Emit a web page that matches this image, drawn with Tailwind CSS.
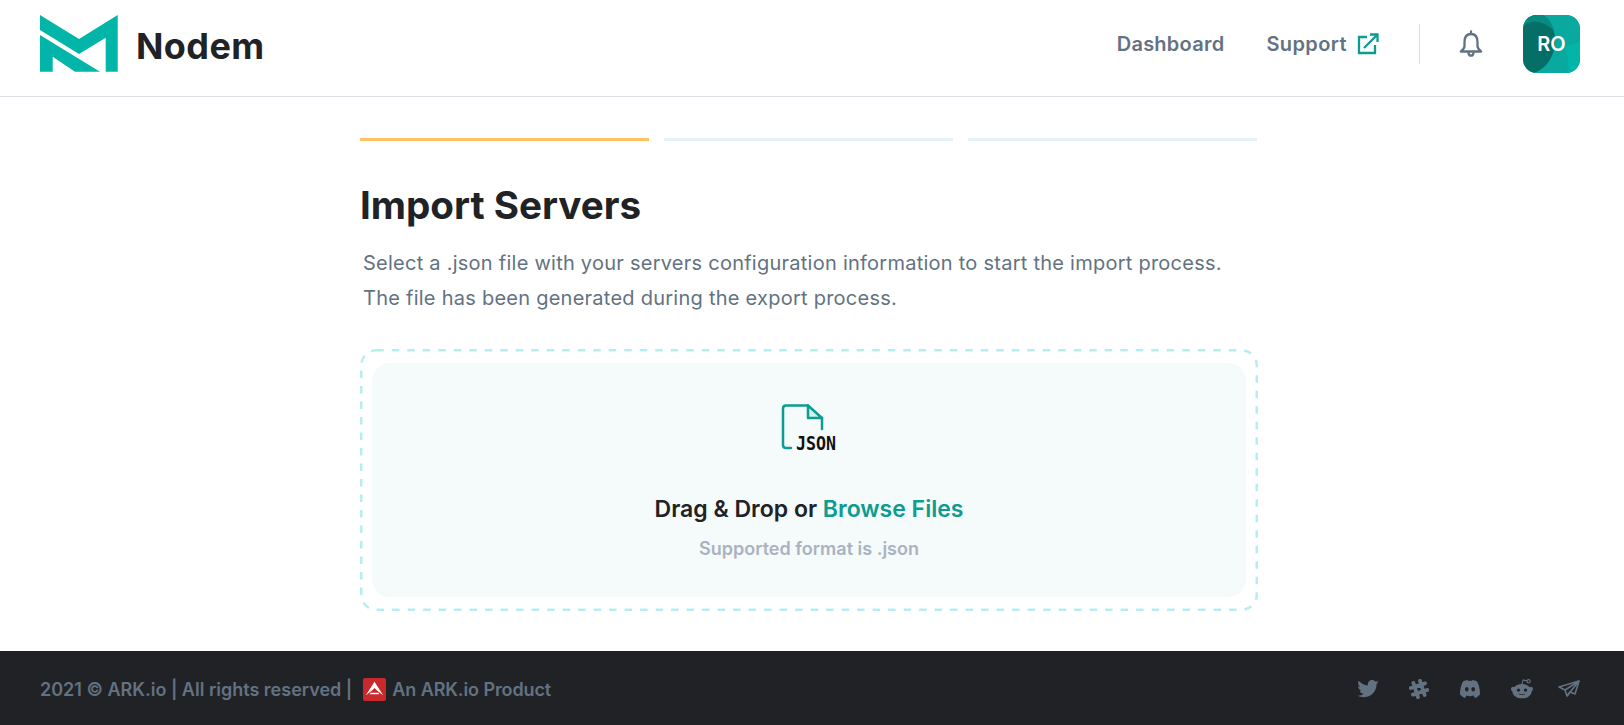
<!DOCTYPE html>
<html>

<head>
  <script src="https://cdn.jsdelivr.net/npm/@tailwindcss/browser@4"></script>
</head>

<body class="bg-white font-['Inter',sans-serif]">
  <div class="flex flex-col h-[725px] overflow-hidden">
    <!-- Header -->
    <header class="flex items-center justify-between h-[97px] pl-10 pr-11 pb-2 border-b border-[#dbdee5] shrink-0">
      <div class="flex items-center gap-[18px]">
        <svg class="-mt-[2px] w-[78px] h-[57px]" viewBox="40 15 78 57" fill="#02b5a9">
          <path d="M40 15L79 39L117.7 15V71.7H105.7V37.7L79 54L40 30Z" />
          <path d="M40 35L100 71.7H75L52.7 56.7V71.7H40Z" />
        </svg>
        <span class="mt-[3px] text-[36px] leading-none font-bold tracking-[0.4px] text-[#212225]">Nodem</span>
      </div>
      <div class="flex items-center">
        <a class="text-[20px] font-semibold tracking-[0.25px] text-[#637282]">Dashboard</a>
        <a class="ml-[42px] text-[20px] font-semibold tracking-[0.4px] text-[#637282]">Support</a>
        <svg class="ml-[10px] w-[22px] h-[22px]" viewBox="0 0 22 22" fill="none" stroke="#0c9c92" stroke-width="2.300">
          <path d="M10 4H2V20H18V12" />
          <path d="M7 15L20 2M13 1.500H20.500V9" />
        </svg>
        <div class="ml-10 w-px h-10 bg-[#dbdee5]"></div>
        <svg class="ml-[39px] w-[24px] h-[28px]" viewBox="0 0 24 28" fill="none" stroke="#637282" stroke-width="2.300" stroke-linejoin="round" stroke-linecap="round">
          <path d="M12 4C7 4 5.500 8 5.500 12V16C5.500 18.500 3.500 20 1.800 21.500H22.200C20.500 20 18.500 18.500 18.500 16V12C18.500 8 17 4 12 4Z" />
          <path d="M12 1.500V4M9.500 23C10 26.500 14 26.500 14.500 23" />
        </svg>
        <div class="relative ml-10 w-[57px] h-[58px] rounded-[14px] overflow-hidden bg-[#0aa99f] flex items-center justify-center">
          <svg class="absolute inset-0 w-full h-full" viewBox="0 0 57 58">
            <path d="M0 0H57V58H0Z" fill="#0aa99f" />
            <path d="M44 58C46 50 45 40 42 32L57 27V58Z" fill="#02b5a9" />
            <path d="M0 0H20C26 4 32 12 32 26C32 42 22 55 10 58H0Z" fill="#056e66" />
            <path d="M0 0H20C26 4 29 8 31 16C24 8 12 5 4 8L0 12Z" fill="#078a80" />
          </svg>
          <span class="relative text-[20px] font-semibold text-white">RO</span>
        </div>
      </div>
    </header>

    <!-- Import step -->
    <main class="flex-1 pl-[360px]">
      <div class="w-[898px]">
        <div class="flex gap-[15.500px] w-[897px] pt-[41px]">
          <div class="flex-1 h-[3px] bg-[#ffc163]"></div>
          <div class="flex-1 h-[3px] bg-[#e5f0f8]"></div>
          <div class="flex-1 h-[3px] bg-[#e5f0f8]"></div>
        </div>
        <h1 class="mt-10 text-[38.6px] leading-[48px] font-bold text-[#212225]">Import Servers</h1>
        <p class="mt-[17px] ml-[3px] text-[20px] leading-[35px] tracking-[0.25px] text-[#637282]">Select a .json file with your servers configuration information to start the import process.<br>The file has been generated during the export process.</p>
        <div class="relative mt-[33px] w-[898px] h-[262px] px-3 pt-[14px] pb-[14px]">
          <svg class="absolute inset-0" width="898" height="262" fill="none">
            <rect x="1.250" y="1.250" width="895.500" height="259.500" rx="15" stroke="#b5eeee" stroke-width="2.500" stroke-dasharray="7.500 8" />
          </svg>
          <div class="flex flex-col items-center h-full rounded-[18px] bg-[#f5fafa]">
            <svg class="mt-[41px] ml-3 w-[68px] h-[52px]" viewBox="0 0 68 52" fill="none">
              <path d="M27 1.500H5C3 1.500 2 2.500 2 4.500V41C2 43 3 44 5 44H10" stroke="#0c9c92" stroke-width="2.500" stroke-linecap="round" />
              <path d="M27 1.500L41 14H27Z" fill="#d4efed" stroke="#0c9c92" stroke-width="2.500" stroke-linejoin="round" />
              <path d="M41 14V25" stroke="#0c9c92" stroke-width="2.500" stroke-linecap="round" />
              <text x="15" y="46" textLength="40" lengthAdjust="spacingAndGlyphs" fill="#111" font-size="19" font-weight="700" font-family="DejaVu Sans Mono">JSON</text>
            </svg>
            <p class="mt-[38px] text-[23px] leading-[30px] font-semibold text-[#212225]">Drag &amp; Drop or <span class="text-[#0c9c92]">Browse Files</span></p>
            <p class="mt-[11px] text-[18px] leading-[28px] font-semibold text-[#a9b3c1]">Supported format is .json</p>
          </div>
        </div>
      </div>
    </main>

    <!-- Footer -->
    <footer class="flex items-center justify-between h-[74px] pl-10 pr-11 pt-[2px] bg-[#212225] shrink-0">
      <div class="flex items-center text-[18px] font-semibold text-[#637282]">
        <span>2021 © ARK.io | All rights reserved |</span>
        <svg class="ml-[11px] w-[23px] h-[23px]" viewBox="0 0 24 24">
          <rect width="24" height="24" rx="2" fill="#c9292c" />
          <path d="M12 4L21 18L12 11L3 18Z" fill="#fff" />
          <path d="M7 17H17L16 15.500H8Z" fill="#fff" />
          <path d="M12 10.500L14.500 13.500H9.500Z" fill="#c9292c" />
        </svg>
        <span class="ml-[6px] tracking-[-0.1px]">An ARK.io Product</span>
      </div>
      <div class="flex items-center">
        <svg class="w-[22px] h-[18px]" viewBox="0 0 24 20" fill="#637282">
          <path d="M24 2.400c-.9.4-1.800.7-2.800.8 1-.6 1.800-1.600 2.200-2.700-1 .6-2 1-3.100 1.200C19.300.7 18 0 16.600 0c-2.700 0-4.900 2.200-4.900 4.900 0 .4 0 .8.100 1.100C7.700 5.800 4.100 3.900 1.700.9c-.4.7-.7 1.600-.7 2.500 0 1.700.9 3.200 2.200 4.100-.8 0-1.600-.2-2.200-.6v.1c0 2.400 1.700 4.400 3.900 4.800-.4.1-.8.2-1.300.2-.3 0-.6 0-.9-.1.6 2 2.400 3.400 4.600 3.400-1.700 1.300-3.800 2.100-6.100 2.100-.4 0-.8 0-1.200-.1C2.200 18.300 4.800 19.100 7.500 19.100c9.100 0 14-7.500 14-14v-.6c1-.7 1.800-1.600 2.500-2.100z" />
        </svg>
        <svg class="ml-[30px] w-[20px] h-[20px]" viewBox="0 0 20 20" fill="none" stroke="#637282" stroke-width="3.800" stroke-linecap="round">
          <g transform="rotate(-18 10 10)">
            <path d="M6.500 2.500V17.500M13.500 2.500V17.500M2.500 6.500H17.500M2.500 13.500H17.500" />
          </g>
        </svg>
        <svg class="ml-[31px] w-[20px] h-[18px]" viewBox="0 0 20 18" fill="#637282">
          <path fill-rule="evenodd" d="M3 1.500C5 .5 7 0 7.500 0L8 1C9.300.8 10.700.8 12 1L12.500 0C13 0 15 .5 17 1.500 19 5 20 9 20 14.500 18.500 16 16.500 17.500 15 18L13.500 15.500C10.500 16.500 9.500 16.500 6.500 15.500L5 18C3.500 17.500 1.500 16 0 14.500 0 9 1 5 3 1.500ZM6.800 7C5.700 7 5 8 5 9.200 5 10.400 5.700 11.400 6.800 11.400 7.900 11.400 8.600 10.400 8.600 9.200 8.600 8 7.900 7 6.800 7ZM13.200 7C12.100 7 11.400 8 11.400 9.200 11.400 10.400 12.100 11.400 13.200 11.400 14.300 11.400 15 10.400 15 9.200 15 8 14.300 7 13.200 7Z" />
        </svg>
        <svg class="ml-[31px] w-[22px] h-[20px]" viewBox="0 0 20 18" fill="#637282">
          <path fill-rule="evenodd" d="M10 4.500C13.500 4.500 16 6 17 7.500 17.500 6.500 20 7 20 9 20 10 19.500 10.500 18.800 10.800 18.900 14.500 15 17.500 10 17.500S1.100 14.500 1.200 10.800C.5 10.500 0 10 0 9 0 7 2.500 6.500 3 7.500 4 6 6.500 4.500 10 4.500ZM6.800 8.500C5.900 8.500 5.300 9.200 5.300 10S5.900 11.500 6.800 11.500 8.300 10.800 8.300 10 7.700 8.500 6.800 8.500ZM13.200 8.500C12.300 8.500 11.700 9.200 11.700 10S12.300 11.500 13.200 11.500 14.700 10.800 14.700 10 14.100 8.500 13.200 8.500ZM6.500 13C8 15 12 15 13.500 13 12 14 8 14 6.500 13Z" />
          <path d="M10 4.800L11 .8L14.500 1.600" fill="none" stroke="#637282" />
          <circle cx="16" cy="2" r="1.500" fill="none" stroke="#637282" />
        </svg>
        <svg class="ml-[25px] w-[22px] h-[18px]" viewBox="0 0 22 18" fill="none" stroke="#637282" stroke-width="1.600" stroke-linejoin="round">
          <path d="M21 1L1 7L7 10L9 16L12 12L17 14Z" />
          <path d="M21 1L7 10M21 1L9 16" />
        </svg>
      </div>
    </footer>
  </div>
</body>

</html>
